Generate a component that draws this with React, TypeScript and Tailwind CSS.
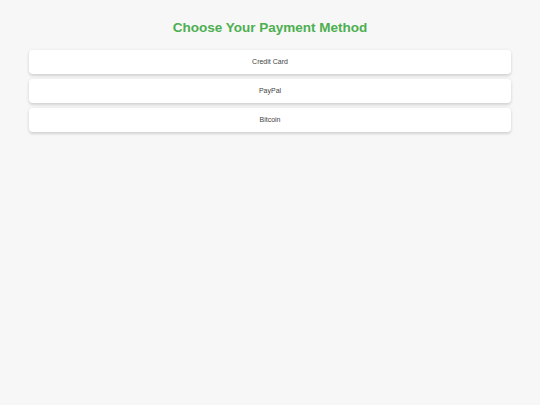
export default function App() {
  const methods = ["Credit Card", "PayPal", "Bitcoin"];
  return (
    <div className="min-h-screen bg-[#f7f7f7] px-[29px] pt-[20px] font-['Liberation_Sans',Arial,sans-serif]">
      <h1 className="text-center text-[13.5px] font-bold leading-[16px] text-[#4caf50]">
        Choose Your Payment Method
      </h1>
      <div className="mt-[14px] flex flex-col gap-[5px]">
        {methods.map((m) => (
          <button
            key={m}
            className="h-[24px] w-full rounded-[4px] bg-white text-[7px] text-[#444] shadow-[0_2px_3px_rgba(0,0,0,0.13),0_0_4px_rgba(0,0,0,0.05)]"
          >
            {m}
          </button>
        ))}
      </div>
    </div>
  );
}
